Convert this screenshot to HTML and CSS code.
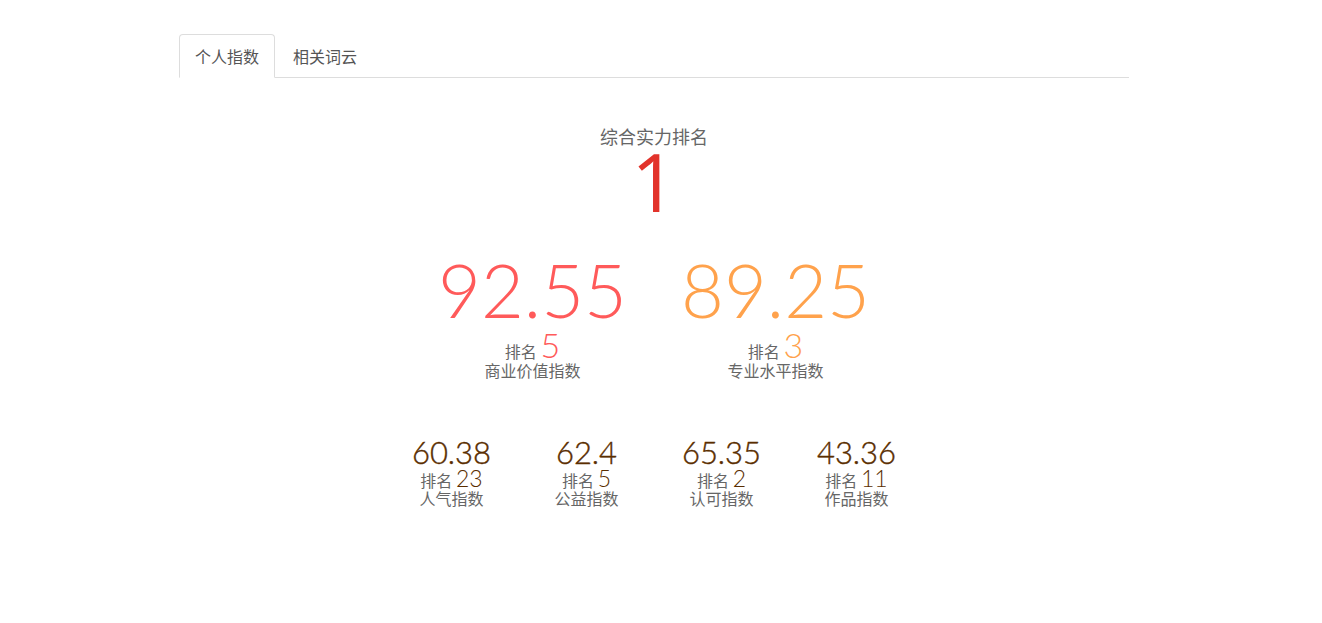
FILE: index.html
```html
<!DOCTYPE html>
<html lang="zh">
<head>
<meta charset="utf-8">
<link rel="stylesheet" href="styles.css">
</head>
<body>
<div class="page">
  <div class="container">
    <ul class="tabs">
      <li class="tab active">个人指数</li>
      <li class="tab">相关词云</li>
    </ul>
    <div class="panel">
      <div class="overall">
        <div class="overall-label">综合实力排名</div>
        <div class="overall-value">1</div>
      </div>
      <div class="major">
        <div class="major-item red">
          <div class="major-value">92.55</div>
          <div class="rank"><span class="rank-label">排名</span> <span class="rank-num">5</span></div>
          <div class="item-label">商业价值指数</div>
        </div>
        <div class="major-item orange">
          <div class="major-value">89.25</div>
          <div class="rank"><span class="rank-label">排名</span> <span class="rank-num">3</span></div>
          <div class="item-label">专业水平指数</div>
        </div>
      </div>
      <div class="minor">
        <div class="minor-item">
          <div class="minor-value">60.38</div>
          <div class="rank"><span class="rank-label">排名</span> <span class="rank-num">23</span></div>
          <div class="item-label">人气指数</div>
        </div>
        <div class="minor-item">
          <div class="minor-value">62.4</div>
          <div class="rank"><span class="rank-label">排名</span> <span class="rank-num">5</span></div>
          <div class="item-label">公益指数</div>
        </div>
        <div class="minor-item">
          <div class="minor-value">65.35</div>
          <div class="rank"><span class="rank-label">排名</span> <span class="rank-num">2</span></div>
          <div class="item-label">认可指数</div>
        </div>
        <div class="minor-item">
          <div class="minor-value">43.36</div>
          <div class="rank"><span class="rank-label">排名</span> <span class="rank-num">11</span></div>
          <div class="item-label">作品指数</div>
        </div>
      </div>
    </div>
  </div>
</div>
</body>
</html>
```

FILE: styles.css
```css
html, body {
  margin: 0;
  padding: 0;
  background: #fff;
}
body {
  font-family: "Noto Sans CJK SC", "Liberation Sans", sans-serif;
  color: #555;
  font-size: 16px;
}
.page {
  padding: 34px 14px 0 0;
}
.container {
  width: 950px;
  margin: 0 auto;
}
.tabs {
  list-style: none;
  margin: 0;
  padding: 0;
  display: flex;
  border-bottom: 1px solid #ddd;
}
.tab {
  padding: 10px 15px;
  line-height: 22px;
  font-size: 16px;
  color: #555;
  border: 1px solid transparent;
  border-radius: 4px 4px 0 0;
  margin-bottom: -1px;
  margin-right: 2px;
}
.tab.active {
  border-color: #ddd;
  border-bottom-color: #fff;
  background: #fff;
}
.panel {
  display: flex;
  flex-direction: column;
  align-items: center;
}
.overall {
  margin-top: 46px;
  text-align: center;
}
.overall-label {
  font-size: 18px;
  line-height: 24px;
  color: #666;
}
.overall-value {
  font-family: "Open Sans", sans-serif;
  font-weight: 400;
  font-size: 80px;
  line-height: 66px;
  color: #e2332b;
}
.major {
  display: flex;
  margin-top: 40px;
}
.major-item {
  width: 243px;
  text-align: center;
}
.major-value {
  font-family: "Lato", sans-serif;
  font-weight: 300;
  font-size: 74px;
  line-height: 72px;
}
.red .major-value, .red .rank-num { color: #ff5a5a; }
.orange .major-value, .orange .rank-num { color: #ffa24c; }
.major .rank {
  line-height: 34px;
  height: 32px;
  margin-top: 2px;
}
.major .rank-num {
  font-family: "Lato", sans-serif;
  font-weight: 300;
  font-size: 34px;
}
.rank-label {
  font-size: 16px;
  color: #666;
}
.item-label {
  font-size: 16px;
  line-height: 20px;
  color: #666;
}
.minor {
  display: flex;
  margin-top: 56px;
}
.minor-item {
  width: 135px;
  text-align: center;
}
.minor-value {
  font-family: "Lato", sans-serif;
  font-weight: 300;
  font-size: 31px;
  line-height: 32px;
  color: #5a2e00;
  -webkit-text-stroke: 0.4px #5a2e00;
}
.minor .rank {
  line-height: 20px;
  height: 20px;
}
.minor .rank-num {
  font-family: "Lato", sans-serif;
  font-weight: 300;
  font-size: 23px;
  color: #5a2e00;
}
```
